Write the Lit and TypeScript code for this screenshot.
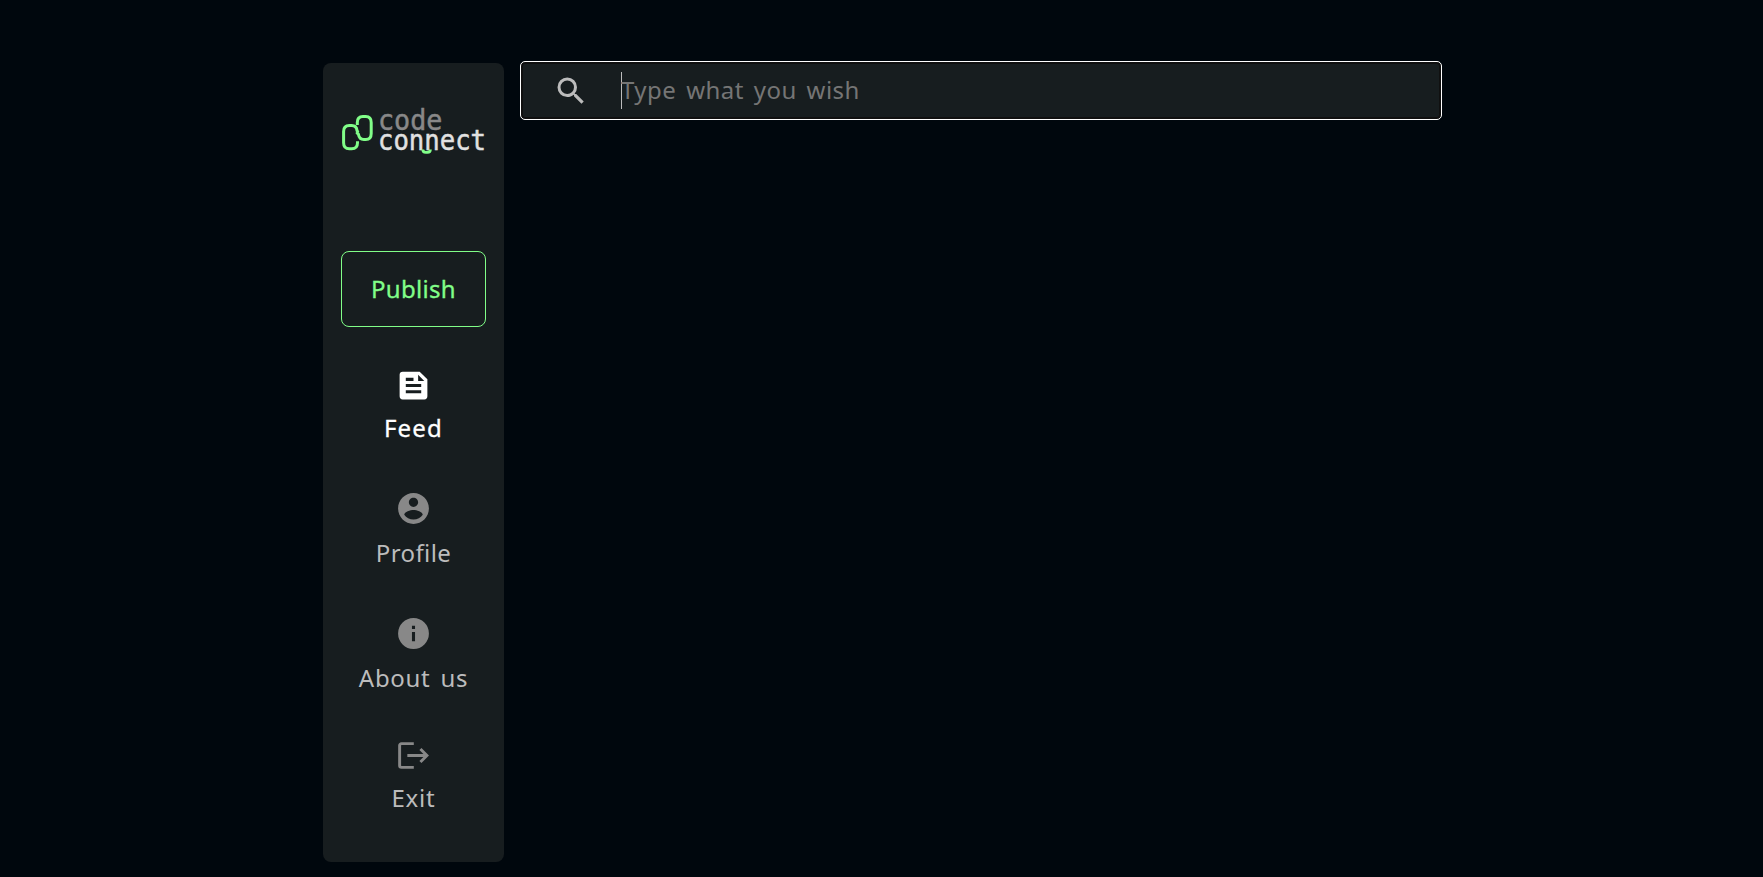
import { LitElement, html, svg, css } from "lit";
import { customElement, property } from "lit/decorators.js";

const icons: Record<string, unknown> = {
  feed: svg`<path d="M16 3H5a2 2 0 0 0-2 2v14a2 2 0 0 0 2 2h14a2 2 0 0 0 2-2V8l-5-5zM7 7h5v2H7V7zm10 10H7v-2h10v2zm0-4H7v-2h10v2zm-2-4V5l4 4h-4z"/>`,
  profile: svg`<path d="M12 2C6.480 2 2 6.480 2 12s4.480 10 10 10 10-4.480 10-10S17.520 2 12 2zm0 3c1.660 0 3 1.340 3 3s-1.340 3-3 3-3-1.340-3-3 1.340-3 3-3zm0 14.200c-2.500 0-4.710-1.280-6-3.220.03-1.990 4-3.080 6-3.080 1.990 0 5.970 1.090 6 3.080-1.290 1.940-3.500 3.220-6 3.220z"/>`,
  info: svg`<path d="M12 2a10 10 0 1 0 0 20 10 10 0 0 0 0-20zm1 15h-2v-6h2v6zm0-8h-2V7h2v2z"/>`,
  exit: svg`<path d="M12.200 4.300H4.200a1.200 1.200 0 0 0-1.200 1.200v13a1.200 1.200 0 0 0 1.200 1.200h8M8 12h12.300M16.500 7.800 20.700 12l-4.200 4.200" fill="none" stroke="currentColor" stroke-width="1.900"/>`,
};

@customElement("nav-item")
export class NavItem extends LitElement {
  @property() icon = "";
  @property() label = "";
  static styles = css`
    :host { display: flex; flex-direction: column; align-items: center; color: #888; }
    svg { display: block; width: 37px; height: 37px; fill: currentColor; }
    .label { margin-top: var(--label-gap, 6px); font-size: 24px; line-height: 36px; color: #bcbcbc; white-space: nowrap; letter-spacing: var(--track, 0.4px); word-spacing: 3px; }
    :host([active]), :host([active]) .label { color: #fff; }
  `;
  render() {
    return html`<svg viewBox="0 0 24 24">${icons[this.icon]}</svg><span class="label">${this.label}</span>`;
  }
}

@customElement("app-root")
export class AppRoot extends LitElement {
  static styles = css`
    :host { display: flex; box-sizing: border-box; width: 100%; height: 877px; padding: 61px 321px 0 323px; gap: 16px; background: #00070d; font-family: "Noto Sans", sans-serif; overflow: hidden; }
    .side { box-sizing: border-box; width: 181px; height: 799px; margin-top: 2px; padding-top: 45px; border-radius: 8px; background: #171d1f; display: flex; flex-direction: column; align-items: center; flex: none; }
    .logo { display: block; width: 145px; height: 46px; flex: none; overflow: visible; }
    .logo text { font-family: "DejaVu Sans Mono", monospace; font-size: 29px; stroke-width: 0.5px; }
    .dim { fill: #888; stroke: #888; }
    .bright { fill: #e1e1e1; stroke: #e1e1e1; }
    .publish { box-sizing: border-box; width: 145px; height: 76px; margin: 97px 0 0; flex: none; border: 1px solid #81fe88; border-radius: 8px; background: none; color: #81fe88; font: 24px "Noto Sans", sans-serif; letter-spacing: 0.3px; padding: 0 0 2px; -webkit-text-stroke: 0.3px #81fe88; }
    nav { display: flex; flex-direction: column; align-items: center; margin-top: 40px; }
    .feed { --track: 1.2px; -webkit-text-stroke: 0.3px #fff; }
    .profile { margin-top: 44px; --label-gap: 8px; }
    .info { margin-top: 44px; --label-gap: 8px; --track: 0.7px; }
    .exit { margin-top: 41px; --track: 0.8px; }
    .search { box-sizing: border-box; width: 922px; height: 59px; border: 1px solid #fff; border-radius: 5px; background: #171d1f; box-shadow: inset 0 0 0 2px #101010; display: flex; align-items: center; flex: none; }
    .glass { width: 36px; height: 36px; margin-left: 32px; fill: #bcbcbc; }
    .caret { width: 1px; height: 37px; margin-left: 32px; background: #bcbcbc; }
    .hint { font-size: 24px; line-height: 36px; padding-bottom: 1px; margin-left: -1px; color: #757575; white-space: nowrap; letter-spacing: 0.5px; word-spacing: 3px; }
  `;
  render() {
    return html`
      <aside class="side">
        <svg class="logo" viewBox="0 0 145 46">
          <g fill="none" stroke="#81fe88" stroke-width="3">
            <path d="M16.300 17V14.500q0-6 5.500-6h3q5.400 0 5.400 6v11q0 6-5.400 6h-2q-4.500 0-5.300-5l-2-2.500"/>
            <path d="M17 24.500l-1-2q-.5-5-5.300-5H8.300q-5.700 0-5.700 6v11.200q0 6 5.700 6h2.400q5.800 0 5.800-6v-1.500"/>
          </g>
          <text class="dim" x="37" y="22" textLength="64.500" lengthAdjust="spacingAndGlyphs">code</text>
          <text class="bright" x="37" y="41.800" textLength="108" lengthAdjust="spacingAndGlyphs">connect</text>
          <path d="M81.800 41.500q0 2.800 3 2.800h1.600q3 0 3-2.800" fill="none" stroke="#81fe88" stroke-width="2.800"/>
        </svg>
        <button class="publish">Publish</button>
        <nav>
          <nav-item class="feed" icon="feed" label="Feed" active></nav-item>
          <nav-item class="profile" icon="profile" label="Profile"></nav-item>
          <nav-item class="info" icon="info" label="About us"></nav-item>
          <nav-item class="exit" icon="exit" label="Exit"></nav-item>
        </nav>
      </aside>
      <div class="search" role="search">
        <svg class="glass" viewBox="0 0 24 24"><path d="M15.500 14h-.79l-.28-.27A6.470 6.470 0 0 0 16 9.500 6.500 6.500 0 1 0 9.500 16c1.610 0 3.090-.59 4.230-1.570l.27.28v.79l5 4.990L20.490 19l-4.990-5zm-6 0a4.500 4.500 0 1 1 0-9 4.500 4.500 0 0 1 0 9z"/></svg>
        <span class="caret"></span><span class="hint">Type what you wish</span>
      </div>`;
  }
}
